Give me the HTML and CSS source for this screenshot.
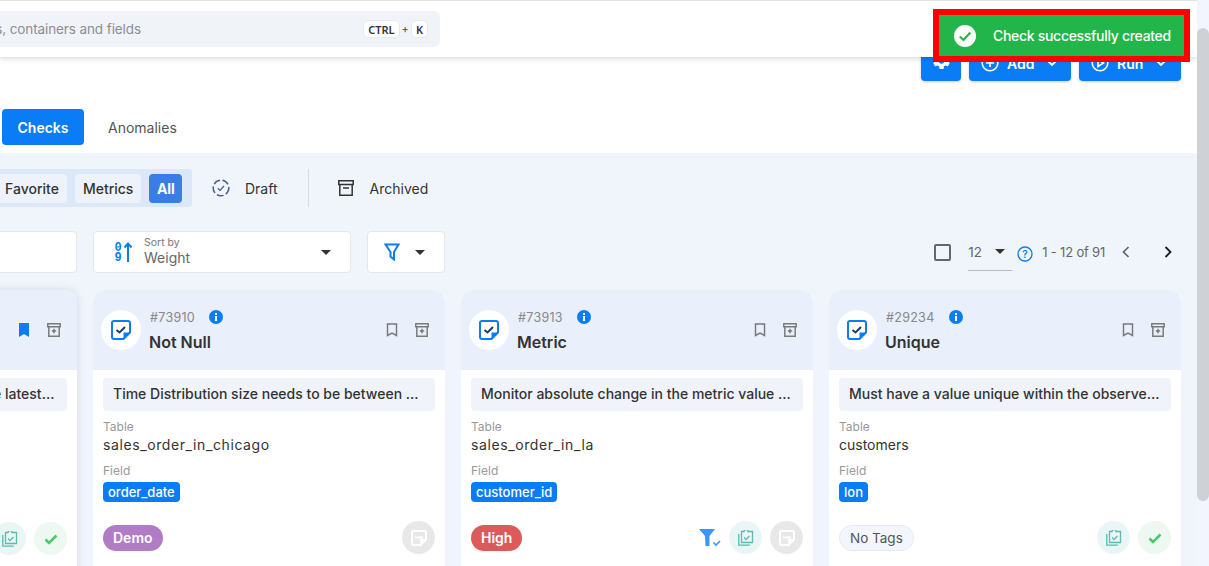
FILE: index.html
```html
<!DOCTYPE html>
<html lang="en">
<head>
<meta charset="utf-8">
<title>Checks</title>
<link rel="stylesheet" href="styles.css">
</head>
<body>
<svg class="sprite" aria-hidden="true">
  <symbol id="check-doc" viewBox="0 0 20 20"><path d="M3 1h14a2 2 0 0 1 2 2v9.500L12.500 19H3a2 2 0 0 1-2-2V3a2 2 0 0 1 2-2z" fill="none" stroke="currentColor" stroke-width="2"/><path d="M19 12.500h-6.500V19z" fill="currentColor"/><path d="M5.500 10l3 2.500 5.500-5.500" fill="none" stroke="#1b3b6b" stroke-width="2"/></symbol>
  <symbol id="info" viewBox="0 0 14 14"><circle cx="7" cy="7" r="7" fill="currentColor"/><rect x="6" y="6" width="2" height="5" fill="#fff"/><rect x="6" y="3" width="2" height="2" fill="#fff"/></symbol>
  <symbol id="bookmark" viewBox="0 0 12 14"><path d="M1.500 1h9v11.500L6 10l-4.500 2.500z" fill="none" stroke="currentColor" stroke-width="1.500"/></symbol>
  <symbol id="bookmark-fill" viewBox="0 0 12 14"><path d="M1 0h10v14l-5-3-5 3z" fill="currentColor"/></symbol>
  <symbol id="archive" viewBox="0 0 14 14"><path d="M.8.800h12.400v3H.8zM1.800 3.800h10.400v9.400H1.800z" fill="none" stroke="currentColor" stroke-width="1.500"/><path d="M7 5.800v4.400M4.800 8h4.400" stroke="currentColor" stroke-width="1.500"/></symbol>
  <symbol id="clip" viewBox="0 0 16 16"><path d="M4 1.500h2a2 2 0 0 1 4 0h4.500v11H3.500v-11z" fill="none" stroke="currentColor" stroke-width="1.300"/><path d="M.8 4v11.200h11" fill="none" stroke="currentColor" stroke-width="1.300"/><path d="M6 7.500l2 2 3.500-3.500" fill="none" stroke="currentColor" stroke-width="1.300"/></symbol>
  <symbol id="tick" viewBox="0 0 14 12"><path d="M1.500 6.500l3.500 3.500 7.500-7.500" fill="none" stroke="currentColor" stroke-width="2.600"/></symbol>
  <symbol id="note" viewBox="0 0 16 16"><path d="M2.500 0h11A2.500 2.500 0 0 1 16 2.500V10l-6 6H2.500A2.500 2.500 0 0 1 0 13.500v-11A2.500 2.500 0 0 1 2.500 0z" fill="#fff"/><path d="M2 2h12v7H9v5H2z" fill="#e8e8e8"/><rect x="4" y="6.500" width="8" height="2" fill="#fff"/></symbol>
  <symbol id="caret" viewBox="0 0 10 5"><path d="M0 0h10L5 5z" fill="currentColor"/></symbol>
  <symbol id="chev-down" viewBox="0 0 10 6"><path d="M1 1l4 4 4-4" fill="none" stroke="currentColor" stroke-width="1.800"/></symbol>
</svg>

<div class="app">
  <div class="page">
    <header class="topbar">
      <div class="search">
        <span class="search-text">Search datastores, containers and fields</span>
        <span class="keys"><kbd class="key">CTRL</kbd><span class="plus">+</span><kbd class="key">K</kbd></span>
      </div>
    </header>

    <section class="head">
      <div class="actions">
        <button class="btn btn-icon"><svg class="gear" viewBox="0 0 24 24"><path fill="currentColor" d="M19.140 12.940c.04-.3.06-.61.06-.94 0-.32-.02-.64-.07-.94l2.030-1.580c.18-.14.23-.41.12-.61l-1.920-3.320c-.12-.22-.37-.29-.59-.22l-2.390.96c-.5-.38-1.030-.7-1.620-.94l-.36-2.540c-.04-.24-.24-.41-.48-.41h-3.840c-.24 0-.43.17-.47.41l-.36 2.540c-.59.24-1.130.57-1.620.94l-2.390-.96c-.22-.08-.47 0-.59.22L2.740 8.870c-.12.21-.08.47.12.61l2.030 1.580c-.05.3-.09.63-.09.94s.02.64.07.94l-2.030 1.580c-.18.14-.23.41-.12.61l1.920 3.320c.12.22.37.29.59.22l2.390-.96c.5.38 1.030.7 1.620.94l.36 2.540c.05.24.24.41.48.41h3.840c.24 0 .44-.17.47-.41l.36-2.540c.59-.24 1.130-.56 1.620-.94l2.390.96c.22.08.47 0 .59-.22l1.920-3.320c.12-.22.07-.47-.12-.61l-2.010-1.580zM12 15.600c-1.980 0-3.600-1.620-3.600-3.600s1.620-3.600 3.600-3.600 3.600 1.620 3.600 3.600-1.620 3.600-3.600 3.600z"/></svg></button>
        <button class="btn btn-wide"><svg class="i18" viewBox="0 0 18 18"><circle cx="9" cy="9" r="7.800" fill="none" stroke="currentColor" stroke-width="1.600"/><path d="M9 5v8M5 9h8" stroke="currentColor" stroke-width="1.600"/></svg><span>Add</span><svg class="chev" viewBox="0 0 10 6"><use href="#chev-down"/></svg></button>
        <button class="btn btn-wide"><svg class="i18" viewBox="0 0 18 18"><circle cx="9" cy="9" r="7.800" fill="none" stroke="currentColor" stroke-width="1.600"/><path d="M7 5.500L12.500 9 7 12.500z" fill="none" stroke="currentColor" stroke-width="1.600"/></svg><span>Run</span><svg class="chev" viewBox="0 0 10 6"><use href="#chev-down"/></svg></button>
      </div>
      <nav class="tabs">
        <a class="tab tab-active">Checks</a>
        <a class="tab">Anomalies</a>
      </nav>
    </section>

    <main class="main">
      <div class="filters">
        <div class="seg">
          <span class="seg-item">Favorite</span>
          <span class="seg-item">Metrics</span>
          <span class="seg-item seg-on">All</span>
        </div>
        <span class="status status-draft"><svg class="i20" viewBox="0 0 20 20"><circle cx="10" cy="10" r="7.800" fill="none" stroke="#4b5f8f" stroke-width="1.500" stroke-dasharray="7 2.500"/><path d="M6.800 10.200l2.200 2.200 4-4.400" fill="none" stroke="#4b5f8f" stroke-width="1.300"/></svg>Draft</span>
        <span class="divider"></span>
        <span class="status status-arch"><svg class="i16" viewBox="0 0 16 16"><path d="M.8.800h14.400v3.600H.8zM1.800 4.400h12.400v10.800H1.800zM5 8h6" fill="none" stroke="#333" stroke-width="1.500"/></svg>Archived</span>
      </div>

      <div class="toolbar">
        <div class="box box-search"></div>
        <div class="box box-sort">
          <svg class="sort-icon" viewBox="0 0 18 20"><text x="3" y="8.500" class="sort-digit">0</text><text x="3" y="19" class="sort-digit">9</text><path d="M13 20V2M9.500 5.500L13 1.500l3.500 4" fill="none" stroke="#0a7cf5" stroke-width="2"/></svg>
          <div class="sort-text"><span class="sort-label">Sort by</span><span class="sort-value">Weight</span></div>
          <svg class="caret" viewBox="0 0 10 5"><use href="#caret"/></svg>
        </div>
        <div class="box box-filter">
          <svg class="funnel-line" viewBox="0 0 16 18"><path d="M1.500 1.500h13L10 9v7.500L6.500 13.500V9z" fill="none" stroke="#0a7cf5" stroke-width="2"/></svg>
          <svg class="caret" viewBox="0 0 10 5"><use href="#caret"/></svg>
        </div>
        <div class="pager">
          <span class="checkbox"></span>
          <span class="per-page"><span>12</span><svg class="caret" viewBox="0 0 10 5"><use href="#caret"/></svg></span>
          <svg class="help" viewBox="0 0 16 16"><circle cx="8" cy="8" r="7" fill="none" stroke="#0a7cf5" stroke-width="1.300"/><text x="8" y="11.500" text-anchor="middle" class="help-q">?</text></svg>
          <span class="range">1 - 12 of 91</span>
          <svg class="pg pg-prev" viewBox="0 0 8 12"><path d="M6.500 1L1.500 6l5 5" fill="none" stroke="#666" stroke-width="1.700"/></svg>
          <svg class="pg pg-next" viewBox="0 0 8 12"><path d="M1.500 1l5 5-5 5" fill="none" stroke="#222" stroke-width="1.900"/></svg>
        </div>
      </div>

      <div class="cards">
        <article class="card card-hover">
          <div class="card-head">
            <span class="tools"><svg class="bm bm-on"><use href="#bookmark-fill"/></svg><svg class="ar"><use href="#archive"/></svg></span>
          </div>
          <div class="card-body">
            <p class="desc">Ensure that the recorded dates are the latest Weighted values</p>
            <div class="meta-spacer"></div>
            <div class="foot foot-end">
              <span class="circle c-teal"><svg class="i16"><use href="#clip"/></svg></span>
              <span class="circle c-green"><svg class="tick"><use href="#tick"/></svg></span>
            </div>
          </div>
        </article>

        <article class="card">
          <div class="card-head">
            <span class="avatar"><svg class="i20"><use href="#check-doc"/></svg></span>
            <div class="ident"><div class="id-row"><span class="id">#73910</span><svg class="info"><use href="#info"/></svg></div><h3 class="title">Not Null</h3></div>
            <span class="tools"><svg class="bm"><use href="#bookmark"/></svg><svg class="ar"><use href="#archive"/></svg></span>
          </div>
          <div class="card-body">
            <p class="desc">Time Distribution size needs to be between Minimum and Maximum</p>
            <div class="label">Table</div><div class="value value-snake">sales_order_in_chicago</div>
            <div class="label label-field">Field</div><span class="tag">order_date</span>
            <div class="foot">
              <span class="pill pill-demo">Demo</span>
              <span class="circle c-gray"><svg class="i16"><use href="#note"/></svg></span>
            </div>
          </div>
        </article>

        <article class="card">
          <div class="card-head">
            <span class="avatar"><svg class="i20"><use href="#check-doc"/></svg></span>
            <div class="ident"><div class="id-row"><span class="id">#73913</span><svg class="info"><use href="#info"/></svg></div><h3 class="title">Metric</h3></div>
            <span class="tools"><svg class="bm"><use href="#bookmark"/></svg><svg class="ar"><use href="#archive"/></svg></span>
          </div>
          <div class="card-body">
            <p class="desc">Monitor absolute change in the metric value over time for this field</p>
            <div class="label">Table</div><div class="value value-snake">sales_order_in_la</div>
            <div class="label label-field">Field</div><span class="tag">customer_id</span>
            <div class="foot">
              <span class="pill pill-high">High</span>
              <svg class="funnel-fill" viewBox="0 0 22 20"><path d="M0 1h16l-5.500 7v10H6.500l-.5-10z" fill="#3b96f5"/><path d="M14.500 14.500l2.500 2.500 4-4" fill="none" stroke="#3b96f5" stroke-width="1.600"/></svg>
              <span class="circle c-teal"><svg class="i16"><use href="#clip"/></svg></span>
              <span class="circle c-gray"><svg class="i16"><use href="#note"/></svg></span>
            </div>
          </div>
        </article>

        <article class="card">
          <div class="card-head">
            <span class="avatar"><svg class="i20"><use href="#check-doc"/></svg></span>
            <div class="ident"><div class="id-row"><span class="id">#29234</span><svg class="info"><use href="#info"/></svg></div><h3 class="title">Unique</h3></div>
            <span class="tools"><svg class="bm"><use href="#bookmark"/></svg><svg class="ar"><use href="#archive"/></svg></span>
          </div>
          <div class="card-body">
            <p class="desc">Must have a value unique within the observed field of this table</p>
            <div class="label">Table</div><div class="value">customers</div>
            <div class="label label-field">Field</div><span class="tag">lon</span>
            <div class="foot">
              <span class="pill pill-none">No Tags</span>
              <span class="circle c-teal"><svg class="i16"><use href="#clip"/></svg></span>
              <span class="circle c-green"><svg class="tick"><use href="#tick"/></svg></span>
            </div>
          </div>
        </article>
      </div>
    </main>
  </div>
  <div class="scrollbar"><div class="thumb"></div></div>
</div>

<div class="toast">
  <svg class="toast-icon" viewBox="0 0 22 22"><circle cx="11" cy="11" r="11" fill="#fff"/><path d="M5.800 11.500l3.700 3.500 6.800-7.500" fill="none" stroke="#22b549" stroke-width="2"/></svg>
  <span>Check successfully created</span>
</div>
</body>
</html>
```

FILE: styles.css
```css
* { box-sizing: border-box; }
html, body { margin: 0; height: 566px; overflow: hidden; }
body { font-family: Inter, "Noto Sans", sans-serif; font-size: 14px; color: #333; background: #fff; }
.sprite { display: none; }
svg { display: block; flex: none; }
.i16 { width: 16px; height: 16px; }
.i18 { width: 18px; height: 18px; }
.i20 { width: 20px; height: 20px; }

.app { display: flex; height: 566px; }
.page { width: 1197px; flex: none; overflow: hidden; height: 566px; }
.scrollbar { width: 12px; flex: none; background: #f2f5fd; padding-top: 28px; }
.thumb { height: 473px; background: #ced1d6; border-radius: 6px; }

/* top bar */
.topbar { position: relative; z-index: 2; height: 57px; background: #fff; border-top: 1px solid #e2e2e2; box-shadow: 0 2px 5px rgba(0,0,0,.14); padding-top: 10px; }
.search { width: 568px; margin-left: -128px; height: 36px; background: #f0f4f9; border-radius: 6px; display: flex; align-items: center; justify-content: space-between; padding: 0 12px 0 16px; }
.search-text { color: #8a8f96; font-size: 13.5px; letter-spacing: -.1px; }
.keys { display: flex; align-items: center; gap: 2px; }
.key { font-family: "Noto Sans", sans-serif; font-weight: 600; font-size: 11px; color: #333; background: #fff; border: 1px solid #e6e9ee; border-radius: 5px; height: 18px; padding: 0 4px; display: flex; align-items: center; }
.plus { font-size: 11px; color: #444; }

/* head */
.head { height: 108px; background: #fff; }
.actions { display: flex; justify-content: flex-end; gap: 8px; padding-right: 16px; margin-top: -12px; position: relative; height: 36px; }
.btn { font: 600 14px Inter, sans-serif; color: #fff; background: #0a7cf5; border: 0; border-radius: 4px; height: 36px; display: flex; align-items: center; box-shadow: 0 1px 3px rgba(0,0,0,.2); padding: 0; }
.btn-icon { width: 40px; justify-content: center; }
.gear { width: 21px; height: 21px; margin-top: -5px; }
.btn-wide { width: 102px; gap: 8px; padding-left: 12px; }
.chev { width: 10px; height: 6px; margin-left: 5px; }
.tabs { display: flex; margin-top: 28px; padding-left: 2px; gap: 0; }
.tab { height: 36px; display: flex; align-items: center; padding: 0 16px; color: #555; font-size: 14px; }
.tab-active { width: 82px; justify-content: center; padding: 0; margin-right: 8px; background: #0a7cf5; color: #fff; font-weight: 600; border-radius: 4px; }

/* main */
.main { background: #f0f5fb; padding-top: 16px; height: 413px; }
.filters { display: flex; align-items: center; height: 38px; }
.seg { margin-left: -11px; width: 203px; height: 38px; background: #dce8f8; border-radius: 4px; display: flex; align-items: center; gap: 8px; padding: 0 9px 0 8px; }
.seg-item { height: 29px; display: flex; align-items: center; padding: 0 8px; border-radius: 4px; background: #eef3fb; color: #333; font-weight: 500; }
.seg-on { background: #3a7de6; color: #fff; font-weight: 700; width: 33px; padding: 0; justify-content: center; }
.status { display: flex; align-items: center; color: #333; font-weight: 400; }
.status-draft { margin-left: 19px; gap: 14px; }
.divider { width: 1px; height: 38px; background: #d6dbe0; margin-left: 30px; }
.status-arch { margin-left: 29px; gap: 16px; }

.toolbar { display: flex; align-items: center; gap: 16px; margin-top: 24px; height: 42px; }
.box { height: 42px; background: #fff; border: 1px solid #e3e8ee; border-radius: 4px; display: flex; align-items: center; }
.box-search { width: 177px; margin-left: -100px; }
.box-sort { width: 258px; padding: 0 19px 0 21px; }
.sort-icon { width: 18px; height: 20px; overflow: visible; }
.sort-digit { font: 800 12px "Liberation Mono", monospace; fill: #0a7cf5; text-anchor: middle; }
.sort-text { display: flex; flex-direction: column; margin-left: 11px; flex: 1; }
.sort-label { font-size: 10.5px; color: #777; line-height: 12px; }
.sort-value { font-size: 14px; color: #666; line-height: 18px; }
.caret { width: 10px; height: 5px; color: #333; }
.box-filter { width: 78px; padding-left: 16px; gap: 15px; }
.funnel-line { width: 16px; height: 18px; }
.pager { margin-left: auto; display: flex; align-items: center; padding-right: 25px; }
.checkbox { width: 17px; height: 17px; border: 2px solid #666; border-radius: 2px; }
.per-page { margin-left: 17px; width: 44px; height: 38px; border-bottom: 1px solid #bbb; display: flex; align-items: center; justify-content: space-between; padding: 0 7px 0 0; color: #666; font-size: 13.5px; }
.help { width: 16px; height: 16px; margin-left: 5px; margin-top: 4px; }
.help-q { font: 600 10px Inter, sans-serif; fill: #0a7cf5; }
.range { margin-left: 9px; color: #666; font-size: 13px; letter-spacing: -.2px; white-space: nowrap; }
.pg { width: 8px; height: 12px; }
.pg-prev { margin-left: 17px; }
.pg-next { margin-left: 34px; }

/* cards */
.cards { display: grid; grid-template-columns: repeat(4, 352px); gap: 16px; margin-top: 17px; margin-left: -275px; }
.card { background: #fff; border-radius: 12px 12px 0 0; height: 300px; overflow: hidden; }
.card-hover { box-shadow: 0 0 10px rgba(60,80,120,.16); overflow: visible; }
.card-head { height: 80px; background: #e9effb; border-radius: 12px 12px 0 0; display: flex; align-items: center; padding: 0 16px 0 8px; }
.avatar { width: 40px; height: 40px; border-radius: 50%; background: #fff; display: flex; align-items: center; justify-content: center; color: #0a7cf5; }
.ident { margin-left: 8px; flex: 1; }
.id-row { display: flex; align-items: center; gap: 14px; height: 14px; margin-top: 2px; padding-left: 1px; }
.id { font-size: 12.5px; color: #888; letter-spacing: .3px; }
.info { width: 14px; height: 14px; color: #0a7cf5; }
.title { margin: 8px 0 0; font-size: 16px; line-height: 20px; font-weight: 600; color: #333; }
.tools { display: flex; align-items: center; gap: 17px; margin-left: auto; }
.bm { width: 12px; height: 14px; color: #7a7a7a; }
.bm-on { color: #0a7cf5; }
.ar { width: 14px; height: 14px; color: #7a7a7a; }
.card-body { padding: 8px 10px 0; }
.desc { margin: 0; height: 33px; line-height: 32px; padding: 0 10px; background: #f0f4fa; border-radius: 4px; font-weight: 500; color: #333; white-space: nowrap; overflow: hidden; text-overflow: ellipsis; }
.label { margin-top: 8px; font-size: 12px; line-height: 16px; color: #999; }
.label-field { margin-bottom: 3px; }
.value { font-size: 14px; line-height: 20px; color: #333; font-weight: 400; }
.value-snake { letter-spacing: .6px; }
.tag { display: inline-block; height: 20px; line-height: 20px; padding: 0 5px; border-radius: 4px; background: #0a7cf5; color: #fff; font-size: 13px; font-weight: 500; }
.foot { display: flex; align-items: center; gap: 8px; margin-top: 19px; height: 33px; }
.meta-spacer { height: 92px; }
.foot-end { justify-content: flex-end; }
.pill { height: 26px; line-height: 26px; padding: 0 10px; border-radius: 13px; font-weight: 600; color: #fff; margin-right: auto; }
.pill-demo { background: #b07cc6; }
.pill-high { background: #dd5a5a; }
.pill-none { background: #f3f6fc; border: 1px solid #e3eaf7; color: #555; font-weight: 400; font-size: 13.5px; line-height: 24px; }
.circle { width: 33px; height: 33px; border-radius: 50%; display: flex; align-items: center; justify-content: center; }
.c-teal { background: #eaf6f5; color: #5bbcae; }
.c-green { background: #edf8f0; color: #4cc870; }
.c-gray { background: #e8e8e8; }
.tick { width: 14px; height: 12px; }
.funnel-fill { width: 22px; height: 20px; }

/* toast */
.toast { position: fixed; top: 9px; left: 933px; width: 257px; height: 53px; border: 6px solid #f00; background: #22b549; color: #fff; display: flex; align-items: center; font-size: 14px; font-weight: 500; letter-spacing: -.3px; padding-left: 15px; gap: 17px; z-index: 5; }
.toast-icon { width: 22px; height: 22px; }
```
